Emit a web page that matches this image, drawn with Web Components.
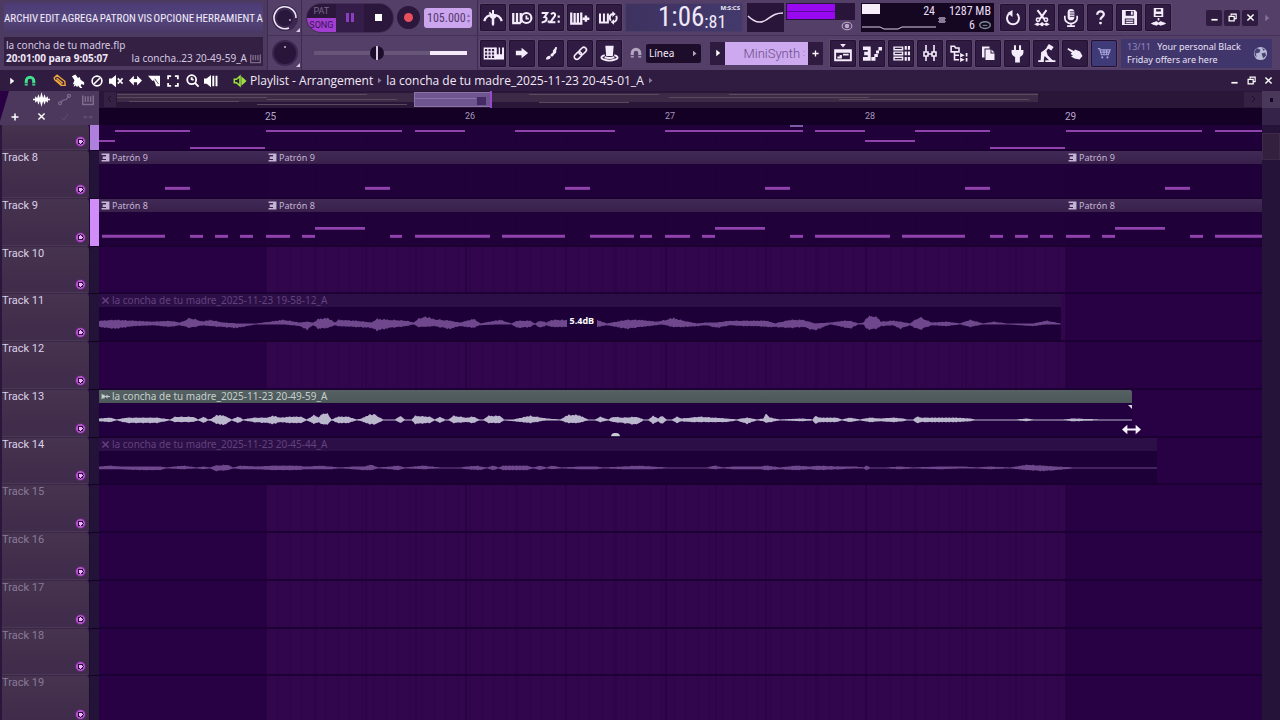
<!DOCTYPE html>
<html lang="es">
<head>
<meta charset="utf-8">
<meta name="viewport" content="width=device-width, initial-scale=1">
<title>Playlist - Arrangement</title>
<style>
html, body { height: 100%; margin: 0; }
body { background: #290044; color: #fff; font-family: "Noto Sans", "Open Sans", sans-serif; overflow: hidden; }
</style>
</head>
<body>
<daw-app></daw-app>
<script>
const define = (name, css, render) => customElements.define(name, class extends HTMLElement {
  connectedCallback() {
    if (this.shadowRoot) return;
    const root = this.attachShadow({ mode: 'open' });
    root.innerHTML = `<style>*{box-sizing:border-box}button,input,select{font:inherit;color:inherit;margin:0;border:0;padding:0;background:none;appearance:none}${css}</style>${render(this)}`;
  }
});

/* ---------- icons, all on a 16 x 16 grid ---------- */
const F = 'fill="currentColor" stroke="none"';
const ICONS = {
  metro: `<path d="M1 10.500c1-3.500 3-5 7-5s6 1.500 7 5" stroke-width="1.800"/><path ${F} d="M7.200 1.500h1.600V5l2.200 2-2 1.500V13L8 14.500 7 13V8.500L5 7l2.200-2z"/><path d="M5 3.500l2 2" />`,
  waitkeys: `<path d="M1 4v8h6M1 12V4M4 4v8M7 4v8" stroke-width="1.800"/><circle cx="11.500" cy="8" r="4" stroke-width="1.700"/><path d="M11.500 6v2.500h2"/>`,
  count: `<path d="M.5 4h4.500L2.800 7.200c3 0 2 4.300-2.300 4.300M8 5c2-2 4-.5 3 1.500L7.500 11.300h4" stroke-width="1.600"/><path ${F} d="M5.300 10H7v1.800H5.300zM13.300 6H15v1.800h-1.700zM13.300 10H15v1.800h-1.700z"/>`,
  addkeys: `<path d="M1 3.500v9h8v-9M3.700 4v8M6.300 4v8" stroke-width="1.800"/><path d="M10 8.500h5.500M12.700 6v5" stroke-width="2"/>`,
  loopkeys: `<path d="M0 4v8h7V4M3.500 4v8" stroke-width="1.800"/><path d="M9.500 10.500C7.500 7 9 4.500 12 4.500M14.500 6c1 3 0 5.500-3 5.500" stroke-width="1.800"/><path ${F} d="M11 2l3 2.500-3 2.500zM12.500 9l-3 2.500 3 2.500z"/>`,
  typing: `<path d="M1 4h8v8H1zM1 6.700h8M1 9.300h8M3.700 4v8M6.300 4v8" stroke-width="1"/><path ${F} d="M9 3.500h1.500v5H12v-5h1v5h1.500v-5H16v9H9z"/>`,
  arrow: `<path ${F} d="M1 5.500h6.500V2L15 8l-7.500 6v-3.500H1z"/>`,
  brushy: `<path ${F} d="M2 14.500c0-1.500 1-3.500 3.500-4 1-.3 2 .7 1.500 2-.8 1.500-2.500 2-5 2zM7 10.500c-1-2.500 3-2.500 2.500-5C9.500 3.500 11.500 4 12 1h1.500c1 2-.8 3-.5 4.500.5 2.500-2 2.500-2.500 4-.5 1-2 2.500-3.500 1z"/>`,
  link: `<g transform="rotate(-45 8 8)" stroke-width="1.700"><rect x="0" y="5" width="9" height="5.500" rx="2.700"/><rect x="7" y="5" width="9" height="5.500" rx="2.700"/></g>`,
  hat: `<path ${F} d="M4.500 1.500h7l-.7 8.500h-5.600z"/><path d="M4 9.500C1 10 0 12 3 13c3 1.200 7 1.200 10 0 3-1 2-3-1-3.500M4 11c2 1 6 1 8 0" stroke-width="1.600"/>`,
  magnet: `<path d="M3 14V8a5 5 0 0 1 10 0v6" fill="none" stroke-width="4"/><path d="M1 11.500h4M11 11.500h4" stroke="#2a1539" stroke-width="1"/>`,
  playlist: `<path d="M1 5.500h14v9H1zM1 7h14" stroke-width="1.700"/><path d="M3 12h4M5 10.500h2M8 9.500h5" stroke-width="1.600"/><path ${F} d="M5.500 0h5L8 3z"/>`,
  steps: `<path ${F} d="M0 2h6.500v12H0v-3h4V9.500H1v-3h3V5H0zM7 11h3.500v3H7zM9.500 8.500h3v2.500h-3zM11 5.500h2.500V8H11zM13 2.500h3v3h-3z"/>`,
  rack: `<path d="M1 2h8v2.500H1zM1 6.700h8v2.500H1zM1 11.500h8V14H1z"/><path ${F} d="M11 1h2v3.500h-2zM14 1h2v3.500h-2zM11 6.200h2v3.500h-2zM14 6.200h2v3.500h-2zM11 11.300h2v3.500h-2zM14 11.300h2v3.500h-2z"/>`,
  mixer: `<path d="M4 0v16M12 0v16" stroke-width="1.600"/><path fill="#2f1a40" stroke-width="1.600" d="M2 7h4v4H2zM10 7h4v4h-4zM6 9h4"/>`,
  browser: `<path d="M1 2h3l1 1.500h3V7H1zM4 7v7h4M4 10h4"/><path ${F} d="M9 8v4l4-2zM9 12v4l4-2zM14 8h1.500v3H14zM14 12.500h1.500v3H14z"/>`,
  pages: `<path ${F} d="M2 1.500h7.500v2H4.500v9H2z"/><path ${F} d="M5.500 4.500h5v4h4V15h-9zM11.500 4.500l3 3h-3z"/>`,
  plug: `<path ${F} d="M5 1h1.700v4H5zM9.300 1H11v4H9.300zM3 5h10v2c0 2-1.500 3.500-3 4v4.500H6V11C4.500 10.500 3 9 3 7z"/>`,
  press: `<path d="M1 14.500h4L4.500 8 10 2.500M7 14.500h8.500" stroke-width="1.500"/><path ${F} d="M10 0l4 2.500-2 3-4-2.500zM3.500 7l4-2.500 1.500 5 5 5h-3L6.500 10l-1.500 4.500H3z"/>`,
  hand: `<path ${F} d="M1 3l6 3 1-1.500 5 2 2.500 4.500-3 3.500-5-1-3.500-2 2-1L3.500 9l1.500-1.500L.5 4.500z"/>`,
  cart: `<path d="M1 3h2l2 7h8l2-5.500H4M5 7h9M8 4.500v5.500M11 4.500v5.500"/><circle cx="6" cy="13" r="1.200" ${F}/><circle cx="12" cy="13" r="1.200" ${F}/>`,
  undo: `<path d="M4 3.800a6 6 0 1 0 8 0" stroke-width="2"/><path ${F} d="M7.500 0v7L2.500 3z"/>`,
  cut: `<path d="M4 1l6 8M12 1L6 9" stroke-width="1.800"/><circle cx="4.500" cy="9.500" r="1.500"/><circle cx="11.500" cy="9.500" r="1.500"/><path ${F} d="M1 13.500l3-1.500 2 1 2-1.500 2 1.500 2-1 3 1.500-3 1.500-2-1-2 1.500-2-1.500-2 1z"/>`,
  mic: `<rect x="5" y="0" width="6" height="10" rx="3" ${F}/><path d="M2.500 6v2a5.500 5 0 0 0 11 0V6M8 13v2M4.500 15.200h7" stroke-width="1.500"/><path d="M7 2.500h4M7 4.500h4M7 6.500h4" stroke="#2f1a40" stroke-width=".8"/>`,
  help: `<path d="M4.500 5c0-5 7.500-4.500 7 0-.3 2.500-3.500 2.200-3.500 5.500" stroke-width="2.400"/><circle cx="8" cy="13.900" r="1.500" ${F}/>`,
  save: `<path ${F} fill-rule="evenodd" d="M0 0h14l2 2v14H0zM4 1v5h8.500V1zM3 9v6h10V9z"/><path ${F} d="M9.500 1.500h2V5h-2zM4 10h8v1.500H4zM4 12.500h8V14H4z"/>`,
  savenew: `<path ${F} fill-rule="evenodd" d="M4 0h8v7.500H4zM6 1v2h4V1zM5.500 5v1.500h5V5z"/><path ${F} d="M7.300 8.500h1.400v2H7.300zM1.500 13l3-1.500V12l1.500-1 2 1.200L10 11l1.500 1v-.5l3 1.500-3 1.500V14L10 15l-2-1.200L6 15l-1.500-1v.5z"/>`,
  min: `<path d="M2.500 12h11" stroke-width="3"/>`,
  restore: `<path d="M5.500 5V2h9v8H11" stroke-width="2"/><path d="M2 6h9v8H2z" stroke-width="2.200"/>`,
  close: `<path d="M2.500 2.500l11 11M13.500 2.500l-11 11" stroke-width="2.600"/>`,
  tri: `<path ${F} d="M4.500 1.500v13L12.500 8z"/>`,
  pencil: `<path d="M1.500 4.500l3.500-3L14.500 9l.5 5-5 0L2 7z M4.500 5l7.500 6.500M3.500 7l7 6" stroke-width="1.700"/>`,
  paint: `<path ${F} d="M1 2.500L5 .5l3 4 2-1 1 3 4 3v3l-3-1-1 2 2 2.500h-2.500L8 13l-1 2-1.500-2L3 14.500l1-3.500-2 1 2-5z"/>`,
  ban: `<circle cx="8" cy="8" r="6.500" stroke-width="2.200"/><path d="M4 12l8-8" stroke-width="2.200"/>`,
  mute: `<path ${F} d="M0 5h3l5-4v14l-5-4H0z"/><path d="M10 5l5.500 6M15.500 5L10 11" stroke-width="1.800"/>`,
  slip: `<path ${F} d="M0 8l6-6v4h4V2l6 6-6 6v-4H6v4z"/>`,
  slice: `<path ${F} d="M0 1h16v14h-5L8 7 6 8z"/><path d="M9 5l5 7" stroke="#2a1539" stroke-width="1"/>`,
  select: `<path d="M1.500 5.500v-4h4M10.500 1.500h4v4M14.500 10.500v4h-4M5.500 14.500h-4v-4" stroke-width="2.400"/>`,
  zoom: `<circle cx="7" cy="7" r="5.500" stroke-width="2.200"/><path d="M11 11l4.500 4.500M7 7.500V4M7 7h2.500" stroke-width="2.300"/>`,
  play2: `<path ${F} d="M0 5h3l5-4v14l-5-4H0zM9.500 2h2.200v12H9.500zM13.200 2h2.200v12h-2.200z"/>`,
  speaker: `<path d="M1.500 6h2.500l4-3.500v11L4 10H1.500z" stroke-width="1.800"/><path ${F} d="M9.500 2.500v11l6-5.500z"/>`,
  wave: `<path ${F} d="M0 7.200h2V5l2 1.500L5 3l1.500 3.500L8 1l1.500 5.500L11 3l1 3.500L14 5v2.200h2v1.600h-2V11l-2-1.500L11 13l-1.500-3.500L8 15 6.500 9.500 5 13 4 9.500 2 11V8.800H0z"/>`,
  auto: `<path d="M3 12l3-3 4-1 3-4"/><circle cx="2.500" cy="12.500" r="1.800"/><circle cx="13.500" cy="3.500" r="1.800"/>`,
  piano: `<path d="M1 2v12h14V2M4.500 3v7.500M8 3v7.500M11.500 3v7.500" stroke-width="2"/>`,
  plus: `<path d="M8 1v14M1 8h14" stroke-width="3"/>`,
  check: `<path d="M2 9l4 4 7-10" stroke-width="1.500"/>`,
  dots: `<path ${F} d="M0 8l4-3v2h3v2H4v2zM16 8l-4-3v2H9v2h3v2z"/>`,
  pattern: `<path ${F} d="M1 1h14v14H1v-2.500h8v-2H3V6h6V3.500H1z"/>`,
  clipwave: `<path ${F} d="M1 2.500l3 3 1.500-1.500L7 7h2l2-3 1 3h4v2h-4l-1 3-2-3H7l-1.500 3L4 10.500l-3 3z"/>`,
  globe: `<circle cx="8" cy="8" r="7" fill="#b9bad6" stroke="none"/><path fill="#4a4178" stroke="none" d="M4 2l4 2-1 3-4 1 1 4-2-2-.5-4zM9 8l4-1 1 3-3 3-1-2zM10 2l3 2-2 1z"/>`,
  eye: `<ellipse cx="8" cy="8" rx="6.500" ry="5"/><circle cx="8" cy="8" r="3" ${F}/>`,
  disc: `<ellipse cx="8" cy="8" rx="7" ry="4.500" stroke-width="2"/><path d="M5 8.500h6"/>`,
  cursor: `<path ${F} d="M0 8l4.500-4v3.200h7V4L16 8l-4.500 4V8.800h-7V12z"/>`
};
define('daw-icon', `:host{display:inline-flex;flex:none;width:var(--s,16px);height:var(--s,16px)}svg{width:100%;height:100%;overflow:visible}`,
  el => `<svg viewBox="0 0 16 16" fill="none" stroke="currentColor" stroke-width="1.4" aria-hidden="true">${ICONS[el.getAttribute('name')] || ''}</svg>`);
const icon = (n, s = 16) => `<daw-icon name="${n}" style="--s:${s}px"></daw-icon>`;
const NARROW = '"Liberation Sans Narrow","Roboto Condensed",Roboto,sans-serif';

/* ---------- toolbar parts ---------- */
define('tool-button', `:host{display:block;flex:none;width:26px;height:27px}
button{width:100%;height:100%;display:flex;align-items:center;justify-content:center;background:#301b42;box-shadow:inset 0 0 0 1px #24112f,0 0 0 1px #5c4870;border-radius:2px;color:#f4ecfa}
:host([accent]) button{background:#3f3a78;color:#a8a2d8}`,
  el => `<button type="button" aria-label="${el.getAttribute('label')}">${icon(el.getAttribute('icon'), +(el.getAttribute('size') || 18))}</button>`);
const tools = list => list.map(([i, l, s, a]) => `<tool-button icon="${i}" label="${l}" ${s ? `size="${s}"` : ''} ${a || ''}></tool-button>`).join('');

define('menu-panel', `:host{display:flex;flex-direction:column;gap:4px;width:268px;flex:none;padding:3px 4px 4px;border-right:1px solid #3d2b4e;background:#4d3a60}
nav{display:flex;align-items:center;justify-content:space-between;height:30px;background:linear-gradient(#4b3a74,#55467e 50%,#493865);color:#f3ecfb;font:11px ${NARROW}}
nav button{white-space:nowrap}
.hint{height:29px;background:#332042;color:#d6c8e2;font-size:10px;line-height:13px;padding:2px}
.hint div{display:flex;align-items:center;gap:3px;white-space:nowrap}
b{color:#efe6f7;flex:1}daw-icon{color:#7a698a}`,
  () => `<nav aria-label="Menú">${['ARCHIV', 'EDIT', 'AGREGA', 'PATRON', 'VIS', 'OPCIONE', 'HERRAMIENT', 'A'].map(t => `<button type="button">${t}</button>`).join('')}</nav>
<div class="hint"><div>la concha de tu madre.flp</div><div><b>20:01:00 para 9:05:07</b><span>la concha..23 20-49-59_A</span>${icon('piano', 11)}</div></div>`);

define('knob-dial', `:host{display:flex;flex:none;width:34px;height:100%;align-items:center;justify-content:center;border-right:1px solid #3d2b4e}svg{width:30px;height:30px}`,
  el => `<svg viewBox="0 0 30 30" role="img" aria-label="${el.getAttribute('label')}"><circle cx="15" cy="15" r="13" fill="#3b2750"/>${el.hasAttribute('arc') ? '<path d="M19 25A11 11 0 1 1 26 15" fill="none" stroke="#efe8f6" stroke-width="1.6"/><circle cx="15" cy="15" r="8" fill="#2a173c"/><circle cx="20" cy="17" r="1" fill="#bba9cc"/>' : '<circle cx="15" cy="15" r="11" fill="#291539"/><circle cx="15" cy="9" r="1" fill="#c9b9d8"/>'}<path d="M30 25v4h-4z" fill="#d8cce4"/></svg>`);

define('transport-bar', `:host{display:flex;align-items:center;flex:none;width:176px;height:100%;padding:0 5px;gap:4px;border-right:1px solid #3d2b4e}
.pill{display:flex;flex:none;width:86px;height:28px;border-radius:14px;overflow:hidden;background:#2a173b;box-shadow:0 0 0 1px #432f56}
.pill>*{flex:1;display:flex;align-items:center;justify-content:center}
.mode{flex-direction:column;font:9px/12px Roboto,sans-serif;align-items:stretch}
.mode button{flex:1;color:#796788}.mode button+button{background:#a23fd2;color:#3b1358}
.pause{background:#341d49}.pause i{width:3px;height:9px;background:#8b3fc0;margin:1px}.stop i{width:7px;height:7px;background:#fff}
.rec{width:23px;height:23px;border-radius:50%;background:#2c173d;display:flex;align-items:center;justify-content:center;flex:none}.rec i{width:9px;height:9px;border-radius:50%;background:#e8505c}
.tempo{display:flex;align-items:center;flex:none;width:48px;height:20px;border-radius:3px;background:#cba6ee;color:#54386e;padding-left:3px;font-family:${NARROW}}
input{width:40px;font-size:12px}.tempo span{font-size:6px;line-height:6px;color:#8a6ca6}`,
  () => `<div class="pill"><div class="mode"><button type="button">PAT</button><button type="button">SONG</button></div><button type="button" class="pause" aria-label="Pausa"><i></i><i></i></button><button type="button" class="stop" aria-label="Stop"><i></i></button></div>
<button type="button" class="rec" aria-label="Grabar"><i></i></button><label class="tempo"><input value="105.000" aria-label="Tempo"><span>▴<br>▾</span></label>`);

define('volume-slider', `:host{display:flex;align-items:center;flex:none;width:176px;height:100%;padding:0 10px 0 12px;border-right:1px solid #3d2b4e}
input{width:100%;height:16px;background:linear-gradient(90deg,#685678 76%,#f3eafa 76%) center/100% 4px no-repeat}
input::-webkit-slider-thumb{appearance:none;width:14px;height:14px;border-radius:50%;background:linear-gradient(90deg,#0000 6px,#d8cce4 6px,#d8cce4 8px,#0000 8px),#1d0d2b}`,
  () => `<input type="range" min="0" max="100" value="40" aria-label="Volumen">`);

define('time-display', `:host{display:flex;flex:none;width:118px;height:29px;background:linear-gradient(90deg,#3e3260,#43396c);color:#efe8f8;font-family:${NARROW};border:1px solid #4c3d68;padding-left:32px}
.a{font-size:27px;line-height:27px}.cs{display:flex;flex-direction:column;justify-content:space-between;flex:1}.b{font-size:18px;line-height:18px}
small{align-self:flex-end;margin-right:2px;font:bold 6px/8px "Noto Sans",sans-serif}`,
  () => `<span class="a">1:06</span><div class="cs"><small>M:S:CS</small><span class="b">:81</span></div>`);

define('monitor-group', `:host{display:flex;flex:none;gap:2px;align-items:center;height:100%;padding:0 6px 0 4px}
.scope{width:37px;height:29px;background:#2a153a}
.meter{width:69px;height:29px;display:flex;flex-direction:column;align-items:flex-end}.meter svg{width:100%;height:19px;display:block}.meter daw-icon{color:#bba9cc;margin-right:2px}
.cpu{width:133px;height:29px;background:#150722;margin-left:4px;display:grid;grid-template-columns:74px 1fr;font:12px/14px ${NARROW};position:relative;color:#e8ddf2;padding:1px 3px 0 0}
.cpu svg{position:absolute;left:0;top:0;width:90px;height:29px}.cpu span{text-align:right}.cpu i{grid-column:2;font-style:normal;display:flex;justify-content:flex-end;gap:4px;align-items:center;color:#e8ddf2}.cpu daw-icon{color:#7a8a90}`,
  () => `<svg class="scope" viewBox="0 0 37 29"><path d="M1 13c6 6 12 8 18 4s9-7 17-7" fill="none" stroke="#e9def3" stroke-width="1.500"/></svg>
<div class="meter"><svg viewBox="0 0 69 19" preserveAspectRatio="none"><path fill="#2a153a" d="M0 0h69v19H0z"/><path fill="#9809f2" d="M1 1h48v17H1z"/><path fill="#5e089a" d="M1 9h48v1H1z"/></svg>${icon('eye', 12)}</div>
<div class="cpu"><svg viewBox="0 0 90 29"><path fill="#f6effa" d="M1 1h18v10H1z"/><path d="M1 24h18l4 2h14l4-2h34" fill="none" stroke="#d9cce6"/><path fill="#8a7a99" d="M78 14h6v6h-6zM77 15h8v1h-8zM77 18h8v1h-8z"/></svg><span>24</span><span>1287 MB</span><i><span>6</span>${icon('disc', 12)}</i></div>`);

define('window-controls', `:host{display:flex;gap:var(--gap,2px);align-items:center;flex:none}button{width:16px;height:16px;display:flex;align-items:center;justify-content:center;background:var(--bg,none);border-radius:2px}`,
  () => ['min', 'restore', 'close'].map(n => `<button type="button" aria-label="${n}">${icon(n, 9)}</button>`).join(''));

define('snap-select', `:host{display:flex;flex:none;align-items:center;gap:3px;padding:0 9px 0 5px;color:#b5a6c2}
label{display:flex;align-items:center;gap:4px;position:relative}select{width:55px;height:19px;background:#1d0d2a;color:#f3eafa;font-size:10px;padding-left:3px;border-radius:2px}
label daw-icon:last-child{position:absolute;right:3px}`,
  () => `<label>${icon('magnet', 12)}<select aria-label="Ajuste"><option>Línea</option></select>${icon('tri', 7)}</label>`);

define('pattern-picker', `:host{display:flex;flex:none;width:113px;height:23px;margin-right:7px}
button{display:flex;align-items:center;justify-content:center;background:#2f1a40}
.s{width:15px}.n{flex:1;background:#cda9f0;color:#6b4d86;font:300 13px Roboto,sans-serif;justify-content:flex-end;padding-right:3px;gap:3px}.n i{font-style:normal;font-size:9px}`,
  () => `<button class="s" type="button" aria-label="Anterior">${icon('tri', 8)}</button><button class="n" type="button">MiniSynth<i>:</i></button><button class="s" type="button" aria-label="Añadir">${icon('plus', 7)}</button>`);

define('news-panel', `:host{display:flex;flex:1 1 150px;min-width:0;height:29px;margin:0 8px 0 4px;background:#41366c}
a{flex:1;display:flex;justify-content:space-between;align-items:center;padding:0 4px 0 6px;color:#eae2f6;text-decoration:none;font-size:10px;line-height:13px}p{margin:0;white-space:nowrap;font-size:9px}span{color:#8f86bd;margin-right:4px}`,
  () => `<a href="#news"><p><span>13/11</span> Your personal Black<br>Friday offers are here</p>${icon('globe', 15)}</a>`);

define('daw-toolbar', `:host{display:flex;height:70px;flex:none;background:#543f68}
.rows{flex:1;min-width:0;display:grid;grid-template-rows:35px 35px}.row{display:flex;align-items:center;min-width:0}.row+.row{border-top:1px solid #45325a}
.set{display:flex;gap:3px;flex:none}.lead{padding:0 3px 0 2px}
window-controls{--bg:#2f1a40;--gap:2px;margin-left:auto}.more{color:#84729a;margin:0 9px 0 5px}`,
  () => `<menu-panel></menu-panel><div class="rows">
<div class="row"><knob-dial arc label="Volumen principal"></knob-dial><transport-bar></transport-bar>
<div class="set lead">${tools([['metro', 'Metrónomo', 20], ['waitkeys', 'Esperar', 20], ['count', 'Cuenta atrás', 20], ['addkeys', 'Mezclar grabación', 20], ['loopkeys', 'Grabar en bucle', 18]])}</div>
<time-display></time-display><monitor-group></monitor-group>
<div class="set">${tools([['undo', 'Deshacer', 16], ['cut', 'Cortar'], ['mic', 'Micrófono', 18], ['help', 'Ayuda', 15], ['save', 'Guardar', 15], ['savenew', 'Guardar nueva versión', 19]])}</div>
<window-controls></window-controls><daw-icon class="more" name="tri" style="--s:8px"></daw-icon></div>
<div class="row"><knob-dial label="Tono principal"></knob-dial><volume-slider></volume-slider>
<div class="set lead">${tools([['typing', 'Teclado', 21], ['arrow', 'Paso', 14], ['brushy', 'Pincel', 15], ['link', 'Enlazar', 15], ['hat', 'Multienlace', 19]])}</div>
<snap-select></snap-select><pattern-picker></pattern-picker>
<div class="set">${tools([['playlist', 'Playlist'], ['steps', 'Piano roll', 19], ['rack', 'Canales', 17], ['mixer', 'Mezclador', 16], ['browser', 'Navegador'], ['pages', 'Proyecto', 16], ['plug', 'Plugins', 19], ['press', 'Rendimiento', 19], ['hand', 'Toque', 16], ['cart', 'Tienda', 14, 'accent']])}</div>
<news-panel></news-panel></div></div>`);

/* ---------- playlist title bar ---------- */
define('playlist-title', `:host{display:flex;align-items:center;height:21px;flex:none;background:#301c40;font:500 12px/20px "Open Sans",sans-serif;padding:0 4px 0 8px}
button{display:flex;width:16px;height:16px;align-items:center;justify-content:center;margin-right:3px}
.menu{width:8px;margin-right:6px}.magnet{color:#3fe08e;margin-right:13px}.pencil{color:#f0a83a}.speaker{color:#9be23c;margin:0 2px 0 10px}
h1{margin:0;font:inherit;display:flex;align-items:center;gap:3px;white-space:nowrap;color:#f2eaf8}h1 daw-icon{color:#8a7a99}
window-controls{margin-left:auto;--gap:1px}`,
  () => `<button class="menu" aria-label="Menú">${icon('tri', 8)}</button>` +
    [['magnet', 12, 'magnet'], ['pencil', 13, 'pencil'], ['paint', 14], ['ban', 12], ['mute', 14], ['slip', 13], ['slice', 12], ['select', 12], ['zoom', 13], ['play2', 14], ['speaker', 14, 'speaker']].map(([n, s, c]) => `<button type="button" class="${c || ''}" aria-label="${n}">${icon(n, s)}</button>`).join('') +
    `<h1><span>Playlist - Arrangement</span>${icon('tri', 7)}<span>la concha de tu madre_2025-11-23 20-45-01_A</span>${icon('tri', 7)}</h1><window-controls></window-controls>`);

/* ---------- playlist head: tool box, overview, ruler ---------- */
define('track-tools', `:host{display:grid;grid-template-columns:30px 23px 23px 23px;grid-template-rows:17px 17px;width:99px;flex:none;background:#4b385c;clip-path:polygon(9px 0,100% 0,100% 100%,0 100%,0 30px);color:#fff}
button{display:flex;align-items:center;justify-content:center}.dim{color:#7e6c8e}.off{color:#614e72}`,
  () => [['', 0], ['wave', 17], ['auto', 13, 'dim'], ['piano', 12, 'dim'], ['plus', 8], ['close', 9], ['check', 10, 'off'], ['dots', 10, 'off']].map(([n, s, c]) => n ? `<button type="button" class="${c || ''}" aria-label="${n}">${icon(n, s)}</button>` : '<span></span>').join(''));

define('song-overview', `:host{display:block;height:17px;background:#2a1638}svg{width:100%;height:100%;display:block}`,
  () => `<svg viewBox="0 0 1163 17" preserveAspectRatio="none"><path fill="#352143" d="M5 1h12v15H5zM1145 1h18v15h-18z"/><path d="M12 5l-3 3 3 3M1153 5l3 3-3 3" fill="none" stroke="#1d0d2a"/>
<path fill="#3c2a46" d="M18 2h921v9H18z"/><path fill="#5b4a5c" d="M18 3h250v1H18zM18 6h150v1H18zM168 8h130v1H168zM30 10h110v1H30zM430 3h130v1H430zM630 3h309v1H630zM570 6h200v1H570zM440 11h90v1h-90zM158 13h150v1H158zM740 8h190v1H740z"/>
<path fill="#6e5590" d="M315 1h76v15h-76z"/><path fill="#8b74a8" d="M315 1h76v1h-76zM315 7h62v1h-62zM315 15h76v1h-76zM315 1h1v15h-1z"/><path fill="#432a66" d="M378 6h9v8h-9z"/><path fill="#9648d0" d="M391 0h2v17h-2z"/></svg>`);

define('bar-ruler', `:host{display:flex;height:17px;background:#130024;color:#a896bc;font:9px/17px Roboto,sans-serif;position:relative}
span{flex:200 1 0}.pre{flex:166 1 0}.last{flex:197 1 0}.big{font-size:10px;color:#b8a6cc}
i{position:absolute;left:59.4%;bottom:-2px;width:13px;height:2px;background:#7d5ba6;z-index:2}`,
  () => `<span class="pre"></span><span class="big">25</span><span>26</span><span>27</span><span>28</span><span class="last big">29</span><i></i>`);

/* ---------- tracks ---------- */
const LANE = 1163;
const gridSvg = () => {
  let lines = '';
  for (let x = 167; x <= 967; x += 50) lines += `<path d="M${x} 0V48" stroke="#20003a" stroke-opacity="${(x - 167) % 200 ? .5 : .9}"/>`;
  for (let x = 179; x < 967; x += 12) lines += `<path d="M${x} 0V48" stroke="#24003f" stroke-opacity=".24"/>`;
  return `<svg class="grid" viewBox="0 0 ${LANE} 48" preserveAspectRatio="none"><path fill="#280044" d="M0 0h1163v48H0z"/><path fill="#31064d" d="M167 0h800v48H167z"/>${lines}</svg>`;
};
define('playlist-track', `:host{display:flex;flex:1 1 0;min-height:0;position:relative}
:host([partial]){flex:0 0 26px}
.head{width:90px;flex:none;background:linear-gradient(#46334f,#3f2b4a);border-left:2px solid #2a173b;border-right:1px solid #1e0d2e;border-radius:0 3px 3px 0;box-shadow:inset 0 -1px #4b3858;position:relative;font:11px/14px Roboto,sans-serif;color:#ddd0e8;border-bottom:1px solid #3a2746}
:host([dim]) .head{color:#8a7a98}
.led{position:absolute;right:3px;bottom:3px;width:11px;height:11px;border-radius:50%;background:radial-gradient(circle,#e9b6ff 0 2px,#2c0f3a 2px,#2c0f3a 3px,#b552cc 3px,#b552cc 4px,#5c2b70 5px)}
.strip{width:9px;flex:none;background:var(--strip,#231339);border-bottom:1px solid #12041f}
.lane{flex:1;min-width:0;position:relative;overflow:hidden}.grid{position:absolute;inset:0;width:100%;height:100%}
.lane::after{content:"";position:absolute;inset:auto 0 0;height:2px;background:#1a0030cc}
.clips{position:absolute;inset:0;display:flex}`,
  el => `<div class="head">${el.getAttribute('name') || ''}<button class="led" type="button" aria-label="Silenciar pista"></button></div><div class="strip"></div><div class="lane">${gridSvg()}<div class="clips"><slot></slot></div></div>`);

define('pattern-clip', `:host{display:flex;flex-direction:column;min-width:0;background:#1e0036cc;overflow:hidden}
header{height:13px;flex:none;display:flex;align-items:center;gap:2px;padding-left:2px;background:linear-gradient(#412a56,#38204b);color:#c6b4d6;font-size:9px;line-height:13px;white-space:nowrap}
svg{flex:1;min-height:0;width:100%;display:block}`,
  el => {
    const a = +el.getAttribute('from'), b = +el.getAttribute('to'), name = el.getAttribute('name');
    el.style.flex = `${b - a} 1 0`;
    const rects = (el.getAttribute('notes') || '').split(' ').filter(Boolean).map(n => n.split(',').map(Number)).map(([x, e, y]) => `<path fill="#9143ad" d="M${x} ${y}H${e}V${y + (name ? 3 : 2)}H${x}z"/>`).join('');
    return `${name ? `<header>${icon('pattern', 9)}<span>${name}</span></header>` : ''}<svg viewBox="${a} 0 ${b - a} ${name ? 35 : 26}" preserveAspectRatio="none">${rects}</svg>`;
  });

/* Envelope points are triples: position in thirds of a pixel from the segment start, level above, level below. */
const WAVES = {
  c11: [[90, '27 3 3 75 4 5 130 3 2 190 2 1 240 3 3 270 1 1 300 6 4 340 2 1 360 4 2 400 1 3 440 0 4 500 0 0 540 2 0 580 4 0 630 1 2 650 2 6 670 1 1 685 5 5 715 6 4 735 1 1 745 4 2 800 3 3 845 1 4 860 5 7 900 4 4 950 3 2 970 1 0 985 5 3 1005 8 3 1030 5 2 1080 3 5 1110 1 2 1150 5 4 1169 1 1'],
    [480, '0 0 1 60 4 0 95 0 0 110 3 4 150 3 3 165 0 0 180 3 4 200 1 1 215 4 3 250 4 3 350 4 3 380 0 1 440 4 5 480 4 3 530 2 1 545 3 0 580 6 3 610 3 3 650 0 2 680 1 1 710 1 4 750 3 1 790 3 2 830 3 2 860 3 3 885 0 3 930 4 4 970 4 3 1005 0 7 1050 1 0 1090 3 3 1110 3 5 1135 0 0'],
    [860, '10 1 0 20 6 5 35 9 6 55 6 4 62 2 2 100 3 1 120 2 5 150 0 1 165 4 4 180 7 6 215 1 1 260 2 2 300 0 0 330 4 3 370 0 0 400 2 0 440 0 0 520 0 2 560 3 0 602 0 0']],
  c13: [[90, '27 1 1 60 2 2 80 0 0 110 2 3 200 2 3 240 0 0 255 3 2 310 3 2 325 0 0 340 3 3 355 0 0 365 1 1 380 5 4 405 4 5 425 0 0 445 3 3 460 0 0 490 2 2 530 2 3 550 4 4 570 2 2 600 3 3 635 3 3 650 0 0 672 5 4 685 2 2 698 7 5 712 7 5 725 0 0 745 3 3 775 3 3 800 0 0 815 1 1 835 5 4 855 6 5 865 3 3 880 0 0 915 0 0 930 4 3 945 0 0 965 0 0 975 4 4 1020 3 3 1035 0 0 1050 3 3 1065 0 0 1075 0 0 1090 4 3 1130 2 2 1150 3 3 1169 0 0'],
    [480, '0 0 0 10 0 0 25 4 3 60 4 3 72 0 0 100 0 1 150 4 3 200 1 0 240 0 0 265 5 3 295 5 3 325 0 0 345 0 0 360 3 2 385 0 0 400 3 2 430 2 3 470 3 5 490 0 0 505 0 0 520 4 4 535 1 1 545 4 4 560 0 0 575 0 0 590 3 3 605 1 1 630 2 2 660 3 2 740 1 2 770 0 0 800 2 4 830 0 0 850 1 1 858 7 3 870 2 2 900 0 0 970 1 1 998 0 0 1005 4 4 1020 2 2 1070 2 2 1085 0 0 1110 2 2 1139 0 0'],
    [860, '0 0 0 30 2 2 60 1 1 100 2 2 130 1 1 140 0 0 160 0 0 170 3 3 185 2 2 290 2 2 330 1 1 345 0 0 470 0 0 500 1 1 520 0 0 610 0 0 640 1 1 720 0 0 816 0 0']],
  c14: [[90, '27 1 1 60 2 1 90 1 1 150 1 2 210 1 2 230 0 0 280 2 1 320 0 0 340 1 1 360 0 0 375 2 3 415 3 2 430 0 0 450 2 1 500 1 1 550 2 2 620 2 2 650 1 1 690 2 1 720 1 1 750 0 0 790 1 1 820 1 2 845 3 2 865 0 0 900 1 1 925 2 2 945 0 0 1000 2 1 1050 0 0 1110 0 0 1130 1 1 1165 2 2'],
    [480, '0 1 2 20 0 0 40 2 2 55 0 0 70 2 2 140 2 2 160 0 0 180 2 2 200 0 0 215 2 1 245 0 0 300 1 1 350 1 1 370 0 0 430 1 1 470 2 1 520 1 1 560 0 0 680 0 0 705 2 1 730 0 0 760 1 1 840 1 1 860 2 2 900 0 1 950 2 2 990 1 1 1015 2 2 1080 1 1 1130 1 0'],
    [860, '10 0 0 20 2 2 30 0 0 80 0 0 120 1 1 160 0 0 240 1 1 310 1 0 350 0 0 390 1 1 450 0 0 500 3 2 550 2 3 590 1 2 640 0 0 891 0 0']]
};
const wavePath = (key, mid) => {
  const pts = [];
  for (const [start, data] of WAVES[key]) {
    const v = data.split(' ').map(Number);
    for (let i = 0; i < v.length; i += 3) pts.push([start + v[i] / 3, v[i + 1], v[i + 2]]);
  }
  const up = [], down = [];
  for (let i = 0; i < pts.length - 1; i++) {
    const [x0, u0, d0] = pts[i], [x1, u1, d1] = pts[i + 1];
    for (let x = x0; x < x1; x += 1) {
      const t = (x - x0) / (x1 - x0), j = .75 + .3 * Math.abs(Math.sin(x * 2.7) * Math.cos(x * .9));
      up.push(`${x.toFixed(1)} ${(mid - .5 - (u0 + (u1 - u0) * t) * j).toFixed(1)}`);
      down.push(`${x.toFixed(1)} ${(mid + .5 + (d0 + (d1 - d0) * t) * j).toFixed(1)}`);
    }
  }
  const end = pts[pts.length - 1][0];
  return `M${up.join('L')}L${end} ${mid - .5}L${end} ${mid + .5}L${down.reverse().join('L')}z`;
};
define('audio-clip', `:host{display:flex;flex-direction:column;min-width:0;background:#1d0037;color:#64417e;position:relative}
header{height:13px;flex:none;display:flex;align-items:center;gap:2px;padding-left:2px;background:#2c0f47;font-size:10px;line-height:13px;white-space:nowrap}
svg{flex:1;min-height:0;width:100%;display:block}path{fill:#6e478c}
:host([active]){background:#22003f;color:#c5cfcb}:host([active]) header{background:linear-gradient(#566164,#4b5759);border-radius:0 2px 0 0}:host([active]) path{fill:#bbb7cd}`,
  el => {
    const a = +el.getAttribute('from'), b = +el.getAttribute('to');
    el.style.flex = `0 0 ${(b - a) / LANE * 100}%`;
    return `<header>${icon(el.hasAttribute('active') ? 'clipwave' : 'close', 9)}<span>${el.getAttribute('name')}</span></header><svg viewBox="${a} 0 ${b - a} 35" preserveAspectRatio="none"><path d="${wavePath(el.getAttribute('wave'), 17)}"/></svg><slot></slot>`;
  });
define('gain-tip', `:host{position:absolute;left:48.6%;top:20px;background:#1d0037;color:#fff;font:bold 9px/14px "Open Sans",sans-serif;padding:0 3px}`, () => `<slot></slot>`);
define('clip-handles', `:host{position:absolute;inset:13px 0 0}.dome{position:absolute;left:49.6%;bottom:1px;width:9px;height:4px;border-radius:5px 5px 0 0;background:#c9cdd4}.fade{position:absolute;right:0;top:2px;border:2px solid;border-color:#dcd4e6 #dcd4e6 #0000 #0000}`, () => `<div class="dome"></div><div class="fade"></div>`);
define('resize-cursor', `:host{position:absolute;left:88%;top:30px;z-index:3;color:#f6f0fa}`, () => icon('cursor', 19));

define('side-scroll', `:host{width:18px;flex:none;display:flex;flex-direction:column;background:#25133a}
button{height:17px;flex:none;display:flex;align-items:center;justify-content:center;background:#4a385b}button+button{background:#36234a}
i{width:3px;height:4px;background:#160722}
.thumb{margin-top:8px;height:27px;background:#33203f;border:1px solid #3d2a49}`,
  () => `<button type="button" aria-label="Centrar"><i></i></button><button type="button" aria-label="Subir"></button><div class="thumb"></div>`);

const P7 = ['99,115,15 115,190,5 190,265,22', '265,402,5 415,465,5 515,615,5 665,803,5 815,865,5 865,915,15 915,990,5 990,1065,22', '1065,1202,5 1215,1262,5'];
const P8 = ['165,190,23', '365,390,23 565,590,23 765,790,23 965,990,23', '1165,1190,23'];
const P9 = ['102,165,23 190,203,23 215,228,23 240,253,23',
  '265,290,23 302,315,23 315,365,15 390,402,23 415,490,23 502,565,23 590,634,23 640,652,23 665,690,23 702,715,23 715,765,15 790,803,23 815,890,23 902,965,23 990,1003,23 1015,1028,23 1040,1053,23',
  '1065,1090,23 1102,1115,23 1115,1165,15 1190,1203,23 1215,1262,23'];
const EDGES = [[99, 266], [266, 1066], [1066, 1262]];
const patterns = (name, notes) => EDGES.map(([a, b], i) => `<pattern-clip from="${a}" to="${b}" name="${name}" notes="${notes[i]}"></pattern-clip>`).join('');

define('playlist-view', `:host{flex:1;min-height:0;display:flex}
.main{flex:1;min-width:0;display:flex;flex-direction:column}.top{display:flex;flex:none}.top>div{flex:1;min-width:0}
.tracks{flex:1;min-height:0;display:flex;flex-direction:column;margin-bottom:-4px}`,
  () => {
    const audio = {
      11: `<audio-clip from="99" to="1061" wave="c11" name="la concha de tu madre_2025-11-23 19-58-12_A"><gain-tip>5.4dB</gain-tip></audio-clip>`,
      13: `<audio-clip active from="99" to="1132" wave="c13" name="la concha de tu madre_2025-11-23 20-49-59_A"><clip-handles></clip-handles></audio-clip><resize-cursor></resize-cursor>`,
      14: `<audio-clip from="99" to="1157" wave="c14" name="la concha de tu madre_2025-11-23 20-45-44_A"></audio-clip>`,
      8: patterns('Patrón 9', P8), 9: patterns('Patrón 8', P9)
    };
    let rows = `<playlist-track partial style="--strip:#ae7fdc">${patterns('', P7)}</playlist-track>`;
    for (let n = 8; n < 20; n++) rows += `<playlist-track name="Track ${n}" ${n > 14 ? 'dim' : ''} ${n === 9 ? 'style="--strip:#d08cf8"' : ''}>${audio[n] || ''}</playlist-track>`;
    return `<div class="main"><div class="top"><track-tools></track-tools><div><song-overview></song-overview><bar-ruler></bar-ruler></div></div><div class="tracks">${rows}</div></div><side-scroll></side-scroll>`;
  });

define('daw-app', `:host{display:flex;flex-direction:column;height:100vh;min-height:480px;overflow:hidden}`,
  () => `<daw-toolbar></daw-toolbar><playlist-title></playlist-title><playlist-view></playlist-view>`);
</script>
</body>
</html>
